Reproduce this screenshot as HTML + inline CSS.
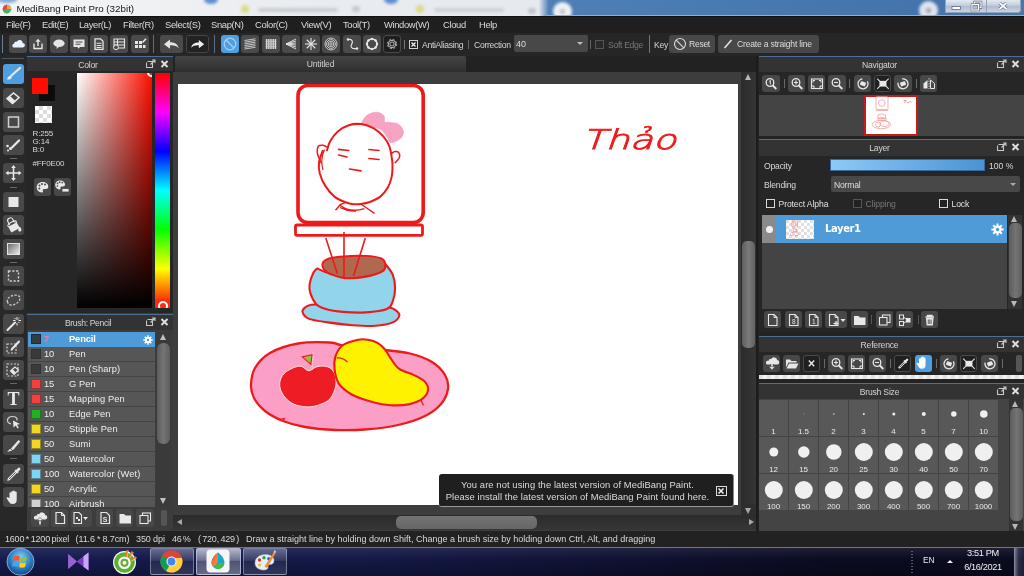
<!DOCTYPE html>
<html lang="en">
<head>
<meta charset="utf-8">
<title>MediBang Paint Pro (32bit)</title>
<style>
*{box-sizing:border-box;margin:0;padding:0}
html,body{width:1024px;height:576px;overflow:hidden;background:#2b2b2b}
body{font-family:"Liberation Sans","DejaVu Sans",sans-serif;font-size:9px;color:#d8d8d8;position:relative;filter:blur(0.45px)}
.abs{position:absolute}
#titlebar{left:0;top:0;width:1024px;height:16px;overflow:hidden;background:linear-gradient(90deg,#f3f4f5 0%,#f0f1f3 14%,#e9ecf0 30%,#e6eaef 52.600%,#4f7fb6 53.600%,#4a7ab2 70%,#4573ac 90%,#4a76ac 100%)}
#titlebar .ttl{left:16.500px;top:2.500px;font-size:9.800px;color:#151515;white-space:nowrap;line-height:11px}
#titlebar .blob{position:absolute;border-radius:50%;filter:blur(1.500px)}
#titlebar .wc{position:absolute;top:0;height:13px;background:linear-gradient(#e4e9f0,#c4cedc 45%,#aebbcd 50%,#c9d3e0);border:1px solid #8fa3bd;border-top:0}
#menubar{left:0;top:16px;width:1024px;height:17px;background:#1f1f1f;border-top:1px solid #111}
#menubar span{position:absolute;top:2px;font-size:9.4px;color:#dcdcdc;white-space:nowrap;letter-spacing:-0.35px}
#toolbar{left:0;top:33px;width:1024px;height:23px;background:#262626}
.tb{position:absolute;top:35px;width:18px;height:18px;background:#4a4a4a;border-radius:3px}
.tb svg,.lt svg,.sb svg{position:absolute;left:0;top:0;width:100%;height:100%}
.sep{position:absolute;width:1px;background:#5a6f86}
.tx{position:absolute;white-space:nowrap}
</style>
</head>
<body>
<!-- ===== title bar ===== -->
<div id="titlebar" class="abs">
  <div class="blob" style="left:-4px;top:-6px;width:22px;height:9px;background:#7fa8d8"></div>
  <div class="blob" style="left:204px;top:-5px;width:14px;height:9px;background:#5f8fd0"></div>
  <div class="blob" style="left:241px;top:5px;width:8px;height:8px;background:#d9dc8a"></div>
  <div class="blob" style="left:258px;top:8px;width:80px;height:4px;background:#c9cdd3;border-radius:2px"></div>
  <div class="blob" style="left:352px;top:6px;width:8px;height:6px;background:#c4c8ce"></div>
  <div class="blob" style="left:384px;top:-5px;width:14px;height:9px;background:#5f8fd0"></div>
  <div class="blob" style="left:416px;top:5px;width:8px;height:8px;background:#dcd98a"></div>
  <div class="blob" style="left:434px;top:8px;width:70px;height:4px;background:#cdd1d7;border-radius:2px"></div>
  <div class="blob" style="left:528px;top:8px;width:8px;height:6px;background:#bfc4cb"></div>
  <div class="blob" style="left:552.500px;top:1.500px;width:19px;height:19px;background:#eef1f5"></div>
  <div class="blob" style="left:559.500px;top:8.500px;width:5px;height:5px;background:#b9bfc8"></div>
  <div class="blob" style="left:919px;top:0.500px;width:19px;height:19px;background:#dfe5ee"></div>
  <div class="blob" style="left:926px;top:7.500px;width:5px;height:5px;background:#9aa3b0"></div>
  <svg class="abs" style="left:2px;top:3.500px" width="10" height="10" viewBox="0 0 10 10"><circle cx="5" cy="5" r="4.300" fill="#2fb8a0"/><path d="M5 .7A4.300 4.300 0 0 0 1.300 7.200L5 5z" fill="#e8483c"/><path d="M5 .7A4.300 4.300 0 0 1 9.300 5L5 5z" fill="#f8a030"/><path d="M1.300 7.200A4.300 4.300 0 0 0 7 8.800L5 5z" fill="#48b848"/></svg>
  <div class="abs" style="left:546px;top:15px;width:478px;height:1px;background:#8fb0d6"></div>
  <div class="abs ttl">MediBang Paint Pro (32bit)</div>
  <div class="wc" style="left:944.500px;width:21px"><svg viewBox="0 0 20 13" style="position:absolute;left:0;top:0;width:20px;height:13px"><rect x="6" y="6.500" width="8.500" height="3" fill="#fff" stroke="#5a6a82" stroke-width="0.800"/></svg></div>
  <div class="wc" style="left:965px;width:22px;border-left:0"><svg viewBox="0 0 21 13" style="position:absolute;left:0;top:0;width:21px;height:13px"><path d="M9.500 4V2h6.500v5.500h-2" fill="none" stroke="#5a6a82" stroke-width="2.400"/><path d="M9.500 4V2h6.500v5.500h-2" fill="none" stroke="#fff" stroke-width="1.200"/><rect x="7" y="4.500" width="6.500" height="5.500" fill="none" stroke="#5a6a82" stroke-width="2.400"/><rect x="7" y="4.500" width="6.500" height="5.500" fill="none" stroke="#fff" stroke-width="1.200"/></svg></div>
  <div class="wc" style="left:986.500px;width:34px;border-left:0;border-radius:0 0 3px 0"><svg viewBox="0 0 10 8" style="position:absolute;left:11.500px;top:2px;width:10px;height:8px"><path d="M1.500 1l7 6M8.500 1l-7 6" stroke="#55657c" stroke-width="3"/><path d="M1.500 1l7 6M8.500 1l-7 6" stroke="#fff" stroke-width="1.800"/></svg></div>
</div>
<!-- ===== menu bar ===== -->
<div id="menubar" class="abs">
  <span style="left:6px">File(F)</span>
  <span style="left:42px">Edit(E)</span>
  <span style="left:79px">Layer(L)</span>
  <span style="left:123px">Filter(R)</span>
  <span style="left:165px">Select(S)</span>
  <span style="left:211px">Snap(N)</span>
  <span style="left:255px">Color(C)</span>
  <span style="left:301px">View(V)</span>
  <span style="left:343px">Tool(T)</span>
  <span style="left:384px">Window(W)</span>
  <span style="left:443px">Cloud</span>
  <span style="left:479px">Help</span>
</div>
<!-- ===== toolbar ===== -->
<div id="toolbar" class="abs"></div>
<!--TOOLBAR-->
<div class="sep" style="left:2px;top:35px;height:18px;background:#6b7f96"></div>
<div class="tb" style="left:9px;width:18px;background:#4a4a4a;"><svg viewBox="0 0 18 18"><path d="M4.5 12.5h9a2.3 2.3 0 0 0 .3-4.6 3.2 3.2 0 0 0-6-1.2 2.2 2.2 0 0 0-2.8 2A2 2 0 0 0 4.5 12.5z" fill="#e8f2ff"/></svg></div>
<div class="tb" style="left:29.25px;width:18px;background:#4a4a4a;"><svg viewBox="0 0 18 18"><path d="M5 8.5v5h8v-5" fill="none" stroke="#e6e6e6" stroke-width="1.4"/><path d="M9 11V5" stroke="#e6e6e6" stroke-width="1.4"/><path d="M6.3 6.8L9 3.8l2.7 3z" fill="#e6e6e6"/></svg></div>
<div class="tb" style="left:49.5px;width:18px;background:#4a4a4a;"><svg viewBox="0 0 18 18"><ellipse cx="9" cy="8.3" rx="5.6" ry="3.7" fill="#e6e6e6"/><path d="M7 11l-.5 3 3-2.5z" fill="#e6e6e6"/></svg></div>
<div class="tb" style="left:69.75px;width:18px;background:#4a4a4a;"><svg viewBox="0 0 18 18"><path d="M3.5 4.5h11v7.5h-4.5l-1.5 1.8-1-1.8h-4z" fill="#e6e6e6"/><path d="M5.5 7h7M5.5 9.3h5" stroke="#4a4a4a" stroke-width="1.1"/></svg></div>
<div class="tb" style="left:90px;width:18px;background:#4a4a4a;"><svg viewBox="0 0 18 18"><path d="M5 3.8h5.5l2.5 2.5v8H5z" fill="none" stroke="#e6e6e6" stroke-width="1.3"/><path d="M6.5 8.3h5M6.5 10.5h5M6.5 12.5h5" stroke="#e6e6e6" stroke-width="1"/></svg></div>
<div class="tb" style="left:110.25px;width:18px;background:#4a4a4a;"><svg viewBox="0 0 18 18"><path d="M4 4h10.5v9H4zM4 7h10.5M4 10h10.5M7.5 4v9" fill="none" stroke="#e6e6e6" stroke-width="1.1"/><circle cx="6" cy="12.3" r="2.4" fill="#4a4a4a" stroke="#e6e6e6" stroke-width="1"/></svg></div>
<div class="tb" style="left:130.5px;width:18px;background:#4a4a4a;"><svg viewBox="0 0 18 18"><path d="M4 6h3v3H4zM8 6h3v3H8zM4 10h3v3H4zM8 10h3v3H8zM12 10h2.5v3H12z" fill="#e6e6e6"/><path d="M11.5 7.5l3.5-3.7" stroke="#e6e6e6" stroke-width="1.6"/></svg></div>
<div class="sep" style="left:153px;top:35px;height:18px"></div>
<div class="tb" style="left:160px;width:23px;background:#4a4a4a;"><svg viewBox="0 0 23 18"><path d="M4 9.2l6-4.6v2.7c4.6 0 8 2 8.6 6-1.7-2.4-4.8-3.1-8.6-2.9v3.4z" fill="#e6e6e6"/></svg></div>
<div class="tb" style="left:186px;width:23px;background:#222;border:1px solid #444;"><svg viewBox="0 0 23 18"><path d="M19 9.2l-6-4.6v2.7c-4.6 0-8 2-8.6 6 1.700-2.400 4.800-3.100 8.600-2.900v3.4z" fill="#f0f0f0"/></svg></div>
<div class="sep" style="left:214px;top:35px;height:18px"></div>
<div class="tb" style="left:221.0px;width:18px;background:#4f9fe0;"><svg viewBox="0 0 18 18"><circle cx="9" cy="9" r="5.800" fill="none" stroke="#9fd0ff" stroke-width="1.300"/><path d="M5 5l8 8" stroke="#9fd0ff" stroke-width="1.300"/></svg></div>
<div class="tb" style="left:241.25px;width:18px;background:#4a4a4a;"><svg viewBox="0 0 18 18"><path d="M3.5 5.5L14.5 3.8" stroke="#e6e6e6" stroke-width="0.8"/><path d="M3.5 7.2L14.5 5.5" stroke="#e6e6e6" stroke-width="0.8"/><path d="M3.5 8.9L14.5 7.199999999999999" stroke="#e6e6e6" stroke-width="0.8"/><path d="M3.5 10.6L14.5 8.899999999999999" stroke="#e6e6e6" stroke-width="0.8"/><path d="M3.5 12.3L14.5 10.6" stroke="#e6e6e6" stroke-width="0.8"/><path d="M3.5 14.0L14.5 12.3" stroke="#e6e6e6" stroke-width="0.8"/></svg></div>
<div class="tb" style="left:261.5px;width:18px;background:#4a4a4a;"><svg viewBox="0 0 18 18"><path d="M4.5 4v10" stroke="#e6e6e6" stroke-width="0.9"/><path d="M6.3 4v10" stroke="#e6e6e6" stroke-width="0.9"/><path d="M8.1 4v10" stroke="#e6e6e6" stroke-width="0.9"/><path d="M9.9 4v10" stroke="#e6e6e6" stroke-width="0.9"/><path d="M11.7 4v10" stroke="#e6e6e6" stroke-width="0.9"/><path d="M13.5 4v10" stroke="#e6e6e6" stroke-width="0.9"/><path d="M3.5 5.0h11" stroke="#e6e6e6" stroke-width="0.6"/><path d="M3.5 6.6h11" stroke="#e6e6e6" stroke-width="0.6"/><path d="M3.5 8.2h11" stroke="#e6e6e6" stroke-width="0.6"/><path d="M3.5 9.8h11" stroke="#e6e6e6" stroke-width="0.6"/><path d="M3.5 11.4h11" stroke="#e6e6e6" stroke-width="0.6"/><path d="M3.5 13.0h11" stroke="#e6e6e6" stroke-width="0.6"/></svg></div>
<div class="tb" style="left:281.75px;width:18px;background:#4a4a4a;"><svg viewBox="0 0 18 18"><path d="M4 9L14 4" stroke="#e6e6e6" stroke-width="0.9"/><path d="M4 9L14 6" stroke="#e6e6e6" stroke-width="0.9"/><path d="M4 9L14 8" stroke="#e6e6e6" stroke-width="0.9"/><path d="M4 9L14 10" stroke="#e6e6e6" stroke-width="0.9"/><path d="M4 9L14 12" stroke="#e6e6e6" stroke-width="0.9"/><path d="M4 9L14 14" stroke="#e6e6e6" stroke-width="0.9"/></svg></div>
<div class="tb" style="left:302.0px;width:18px;background:#4a4a4a;"><svg viewBox="0 0 18 18"><path d="M9 9L15.00 9.00" stroke="#e6e6e6" stroke-width="1.1"/><path d="M9 9L13.24 13.24" stroke="#e6e6e6" stroke-width="1.1"/><path d="M9 9L9.00 15.00" stroke="#e6e6e6" stroke-width="1.1"/><path d="M9 9L4.76 13.24" stroke="#e6e6e6" stroke-width="1.1"/><path d="M9 9L3.00 9.00" stroke="#e6e6e6" stroke-width="1.1"/><path d="M9 9L4.76 4.76" stroke="#e6e6e6" stroke-width="1.1"/><path d="M9 9L9.00 3.00" stroke="#e6e6e6" stroke-width="1.1"/><path d="M9 9L13.24 4.76" stroke="#e6e6e6" stroke-width="1.1"/></svg></div>
<div class="tb" style="left:322.25px;width:18px;background:#4a4a4a;"><svg viewBox="0 0 18 18"><circle cx="9" cy="9" r="1.2" fill="none" stroke="#e6e6e6" stroke-width="0.8"/><circle cx="9" cy="9" r="2.8" fill="none" stroke="#e6e6e6" stroke-width="0.8"/><circle cx="9" cy="9" r="4.4" fill="none" stroke="#e6e6e6" stroke-width="0.8"/><circle cx="9" cy="9" r="6" fill="none" stroke="#e6e6e6" stroke-width="0.8"/></svg></div>
<div class="tb" style="left:342.5px;width:18px;background:#4a4a4a;"><svg viewBox="0 0 18 18"><path d="M5 4.5c5-1 5 3 3.500 5s0 5 5.500 4" fill="none" stroke="#e6e6e6" stroke-width="1.2"/><circle cx="5" cy="4.500" r="1.300" fill="#e6e6e6"/><circle cx="14" cy="13.500" r="1.300" fill="#e6e6e6"/></svg></div>
<div class="tb" style="left:362.75px;width:18px;background:#4a4a4a;"><svg viewBox="0 0 18 18"><circle cx="9" cy="9" r="5" fill="none" stroke="#e6e6e6" stroke-width="1.6"/><circle cx="14.00" cy="9.00" r="1.2" fill="#e6e6e6"/><circle cx="12.54" cy="12.54" r="1.2" fill="#e6e6e6"/><circle cx="9.00" cy="14.00" r="1.2" fill="#e6e6e6"/><circle cx="5.46" cy="12.54" r="1.2" fill="#e6e6e6"/><circle cx="4.00" cy="9.00" r="1.2" fill="#e6e6e6"/><circle cx="5.46" cy="5.46" r="1.2" fill="#e6e6e6"/><circle cx="9.00" cy="4.00" r="1.2" fill="#e6e6e6"/><circle cx="12.54" cy="5.46" r="1.2" fill="#e6e6e6"/></svg></div>
<div class="tb" style="left:383.0px;width:18px;background:#1e1e1e;border:1px solid #4a4a4a;"><svg viewBox="0 0 18 18"><circle cx="9" cy="9" r="5.2" fill="none" stroke="#c8c8c8" stroke-width="1" stroke-dasharray="2.2 1.9"/><circle cx="9" cy="9" r="4.200" fill="none" stroke="#c8c8c8" stroke-width="1"/><circle cx="9" cy="9" r="2.300" fill="none" stroke="#c8c8c8" stroke-width="1"/></svg></div>
<div class="sep" style="left:404px;top:40px;height:9px;background:#777"></div>
<div class="abs" style="left:409px;top:40px;width:9px;height:9px;border:1px solid #d0d0d0;background:#222"><svg viewBox="0 0 7 7" style="position:absolute;left:0;top:0;width:7px;height:7px"><path d="M1.500 1.500l4 4M5.500 1.500l-4 4" stroke="#eee" stroke-width="1.300"/></svg></div>
<div class="tx" style="left:422px;top:39.500px;font-size:8.600px;color:#d6d6d6;letter-spacing:-0.3px">AntiAliasing</div>
<div class="sep" style="left:468px;top:40px;height:9px;background:#666"></div>
<div class="tx" style="left:474px;top:39.500px;font-size:8.600px;color:#d6d6d6;letter-spacing:-0.3px">Correction</div>
<div class="abs" style="left:514px;top:35px;width:74px;height:17px;background:#484848;border-radius:2px"><div class="tx" style="left:2px;top:4px;font-size:9px;color:#ddd">40</div><div class="abs" style="right:5px;top:7px;border-left:3px solid transparent;border-right:3px solid transparent;border-top:3px solid #bbb"></div></div>
<div class="sep" style="left:590px;top:40px;height:9px;background:#666"></div>
<div class="abs" style="left:595px;top:40px;width:9px;height:9px;border:1px solid #555;background:#2a2a2a"></div>
<div class="tx" style="left:608px;top:39.500px;font-size:8.600px;color:#777;letter-spacing:-0.3px">Soft Edge</div>
<div class="sep" style="left:649px;top:35px;height:18px;background:#4f7fb0"></div>
<div class="tx" style="left:654px;top:39.500px;font-size:8.600px;color:#d6d6d6;letter-spacing:-0.3px">Key</div>
<div class="abs" style="left:669px;top:35px;width:46px;height:18px;background:#484848;border-radius:3px"><svg viewBox="0 0 18 18" style="position:absolute;left:2px;top:0;width:18px;height:18px"><circle cx="9" cy="9" r="5.500" fill="none" stroke="#ddd" stroke-width="1.100"/><path d="M5.200 5.200l7.600 7.600" stroke="#ddd" stroke-width="1.100"/></svg><div class="tx" style="left:20px;top:4px;font-size:8.600px;color:#ddd;letter-spacing:-0.3px">Reset</div></div>
<div class="abs" style="left:718px;top:35px;width:101px;height:18px;background:#484848;border-radius:3px"><svg viewBox="0 0 18 18" style="position:absolute;left:1px;top:0;width:18px;height:18px"><path d="M5.500 13l7-8" stroke="#e8e8e8" stroke-width="1.500"/></svg><div class="tx" style="left:19px;top:4px;font-size:8.600px;color:#ddd;letter-spacing:-0.2px">Create a straight line</div></div>
<!--/TOOLBAR-->
<!--LEFTTOOLS-->
<div class="abs" style="left:0;top:56px;width:27px;height:475px;background:#282828"></div>
<div class="abs" style="left:2px;top:58px;width:22px;height:1px;background:#555"></div>
<div class="lt abs" style="left:3px;top:64px;width:21px;height:20px;background:#4f9fe0;border-radius:3px"><svg viewBox="0 0 21 20"><path d="M8.500 11.500L17 4" stroke="#e8e8e8" stroke-width="2.200" stroke-linecap="round"/><path d="M4 15.500c.5-2.500 2-4 4-3.700 1.500 1 .8 3.200-1 3.700z" fill="#e8e8e8"/></svg></div>
<div class="lt abs" style="left:3px;top:88px;width:21px;height:20px;background:#484848;border-radius:3px"><svg viewBox="0 0 21 20"><path d="M4 10.500l6.500-5.500 5.500 4.500-6.500 6z" fill="none" stroke="#e8e8e8" stroke-width="1.600"/><path d="M4 10.500l3-2.500 5.500 5-3 3z" fill="#e8e8e8"/></svg></div>
<div class="lt abs" style="left:3px;top:111.5px;width:21px;height:20px;background:#484848;border-radius:3px"><svg viewBox="0 0 21 20"><rect x="5.500" y="5" width="10" height="10" fill="none" stroke="#d0d0d0" stroke-width="1.500"/></svg></div>
<div class="lt abs" style="left:3px;top:135px;width:21px;height:20px;background:#484848;border-radius:3px"><svg viewBox="0 0 21 20"><path d="M9 12.500L16 5.500" stroke="#e8e8e8" stroke-width="2.200" stroke-linecap="round"/><circle cx="4.500" cy="11" r="1.300" fill="#e8e8e8"/><circle cx="7.500" cy="13.500" r="1.500" fill="#e8e8e8"/><circle cx="5" cy="15.500" r="1" fill="#e8e8e8"/></svg></div>
<div class="abs" style="left:10px;top:157.5px;width:7px;height:1px;background:#666"></div>
<div class="lt abs" style="left:3px;top:163px;width:21px;height:20px;background:#484848;border-radius:3px"><svg viewBox="0 0 21 20"><path d="M10.500 3.500v13M4 10h13" stroke="#e8e8e8" stroke-width="1.500"/><path d="M10.500 2l2.300 3h-4.600zM10.500 18l2.300-3h-4.600zM2.500 10l3-2.300v4.600zM18.500 10l-3-2.300v4.600z" fill="#e8e8e8"/></svg></div>
<div class="abs" style="left:10px;top:186.5px;width:7px;height:1px;background:#666"></div>
<div class="lt abs" style="left:3px;top:192px;width:21px;height:20px;background:#484848;border-radius:3px"><svg viewBox="0 0 21 20"><rect x="5.500" y="5" width="10" height="10" fill="#e8e8e8"/></svg></div>
<div class="lt abs" style="left:3px;top:215px;width:21px;height:20px;background:#484848;border-radius:3px"><svg viewBox="0 0 21 20"><g transform="rotate(-28 10 11)"><path d="M5.500 8.500h9.500v7.500h-9.500z" fill="#e8e8e8"/><ellipse cx="10.250" cy="8.500" rx="4.750" ry="1.600" fill="#484848" stroke="#e8e8e8" stroke-width="1.100"/><path d="M7.500 8.500V5a2.700 2.700 0 0 1 5.400 0V8.500" fill="none" stroke="#e8e8e8" stroke-width="1.100"/></g><path d="M16.800 11.500c1 1.600 1.600 2.700 1.600 3.500a1.600 1.600 0 0 1-3.200 0c0-.8.600-1.900 1.600-3.500z" fill="#e8e8e8"/></svg></div>
<div class="lt abs" style="left:3px;top:238.5px;width:21px;height:20px;background:#484848;border-radius:3px"><svg viewBox="0 0 21 20"><defs><linearGradient id="lg1" x1="0" y1="0" x2="1" y2="1"><stop offset="0" stop-color="#666"/><stop offset="1" stop-color="#f0f0f0"/></linearGradient></defs><rect x="4.500" y="4.500" width="12" height="11" fill="url(#lg1)" stroke="#e0e0e0" stroke-width="1"/></svg></div>
<div class="abs" style="left:10px;top:261.5px;width:7px;height:1px;background:#666"></div>
<div class="lt abs" style="left:3px;top:266px;width:21px;height:20px;background:#484848;border-radius:3px"><svg viewBox="0 0 21 20"><rect x="5.500" y="5" width="10" height="10" fill="none" stroke="#d0d0d0" stroke-width="1.400" stroke-dasharray="2.200 1.600"/></svg></div>
<div class="lt abs" style="left:3px;top:289.5px;width:21px;height:20px;background:#484848;border-radius:3px"><svg viewBox="0 0 21 20"><path d="M4.500 12c-1.500-3.500 3-6.500 7.500-6.800 4-.2 6 2 4.500 5-1.500 3-5 4.800-8.500 4.800-2 0-3-1.500-3.500-3z" fill="none" stroke="#c8c8c8" stroke-width="1.300" stroke-dasharray="2.200 1.500"/></svg></div>
<div class="lt abs" style="left:3px;top:313.5px;width:21px;height:20px;background:#484848;border-radius:3px"><svg viewBox="0 0 21 20"><path d="M4.500 16L12 8.500" stroke="#e8e8e8" stroke-width="2" stroke-linecap="round"/><path d="M14 3v3M14 9v2.500M10 6.500h2.500M15.500 6.500h2.500M11.500 4l1.200 1.200M16.500 4l-1.200 1.200M16.500 9l-1.200-1.200" stroke="#e8e8e8" stroke-width="1"/></svg></div>
<div class="lt abs" style="left:3px;top:336.5px;width:21px;height:20px;background:#484848;border-radius:3px"><svg viewBox="0 0 21 20"><rect x="4" y="7" width="9" height="9" fill="none" stroke="#d0d0d0" stroke-width="1.200" stroke-dasharray="2 1.500"/><path d="M9 12l7-7.500" stroke="#e8e8e8" stroke-width="2" stroke-linecap="round"/><path d="M7.500 14l.8-2.500 1.700 1.600z" fill="#e8e8e8"/></svg></div>
<div class="lt abs" style="left:3px;top:359.5px;width:21px;height:20px;background:#484848;border-radius:3px"><svg viewBox="0 0 21 20"><rect x="4" y="4" width="11" height="12" fill="none" stroke="#d0d0d0" stroke-width="1.200" stroke-dasharray="2 1.500"/><path d="M7.500 11l4.500-4 3.500 3-4.500 4.500z" fill="#484848" stroke="#e8e8e8" stroke-width="1.200"/><path d="M7.500 11l2-1.800 3.500 3.300-2 2z" fill="#e8e8e8"/></svg></div>
<div class="abs" style="left:10px;top:382.5px;width:7px;height:1px;background:#666"></div>
<div class="lt abs" style="left:3px;top:388.5px;width:21px;height:20px;background:#484848;border-radius:3px"><svg viewBox="0 0 21 20"><text x="10.500" y="16" font-family="Liberation Serif,serif" font-weight="bold" font-size="18" text-anchor="middle" fill="#e8e8e8">T</text></svg></div>
<div class="lt abs" style="left:3px;top:411.5px;width:21px;height:20px;background:#484848;border-radius:3px"><svg viewBox="0 0 21 20"><path d="M4.500 9c-.5-2.500 2-4.500 5-4.500s5 1.500 4.500 4" fill="none" stroke="#d0d0d0" stroke-width="1.200"/><path d="M4.500 9c.3 1.500 1.500 2.500 3.500 2.800" fill="none" stroke="#d0d0d0" stroke-width="1.200"/><path d="M10 8.500l7 3.500-3 .8 1.800 3-1.300.7-1.800-3-2.200 2z" fill="#e8e8e8"/></svg></div>
<div class="lt abs" style="left:3px;top:434.5px;width:21px;height:20px;background:#484848;border-radius:3px"><svg viewBox="0 0 21 20"><path d="M8 13.500L15.500 5l1.800 1.600L10 15.200z" fill="#e8e8e8"/><path d="M4 17l3.200-3.200 2 1.800z" fill="#e8e8e8"/></svg></div>
<div class="abs" style="left:10px;top:457.5px;width:7px;height:1px;background:#666"></div>
<div class="lt abs" style="left:3px;top:463.5px;width:21px;height:20px;background:#484848;border-radius:3px"><svg viewBox="0 0 21 20"><path d="M6 15l7-7" stroke="#e8e8e8" stroke-width="2.600" stroke-linecap="round"/><path d="M6 15l7-7" stroke="#484848" stroke-width="0.900" stroke-linecap="round"/><path d="M12 6l3 3" stroke="#e8e8e8" stroke-width="1.600"/><path d="M13.500 7.500l2.500-2.500" stroke="#e8e8e8" stroke-width="2.800" stroke-linecap="round"/><path d="M4.500 16.500l1.200-1.200" stroke="#e8e8e8" stroke-width="1.200"/></svg></div>
<div class="lt abs" style="left:3px;top:486.5px;width:21px;height:20px;background:#484848;border-radius:3px"><svg viewBox="0 0 21 20"><path d="M6.500 11V6.200a.9.900 0 0 1 1.800 0V9.500 4.800a.9.900 0 0 1 1.800 0V9.500 4.300a.9.900 0 0 1 1.800 0V9.500 5.300a.9.900 0 0 1 1.800 0V13c0 2.500-1.500 4-4 4-2 0-3-.8-4-2.500L3.800 11.500c-.5-1 .6-1.700 1.300-1z" fill="#e8e8e8"/></svg></div>
<!--/LEFTTOOLS-->
<!--COLORPANEL-->
<style>
.ph{position:absolute;height:15px;background:#333;border-top:1px solid #4c6f94;font-size:8.6px;color:#d4d4d4;text-align:center;line-height:16px;letter-spacing:-0.2px;overflow:hidden}
.ph .ic{position:absolute;top:2px;right:3px;width:24px;height:10px}
.row{position:absolute;left:0;width:127px;height:15px;background:#565656;border-bottom:1px solid #444}
.row i{position:absolute;left:3px;top:2px;width:10px;height:10px;border:1px solid rgba(40,40,40,0.45)}
.row b{position:absolute;left:16px;top:2px;font-weight:normal;font-size:9.300px;color:#eee;letter-spacing:-0.1px}
.row span{position:absolute;left:41px;top:2px;font-size:9.300px;color:#eee;white-space:nowrap;letter-spacing:0.1px}
.sbt{position:absolute;width:18px;height:18px;background:#484848;border-radius:3px}
.sbt svg{position:absolute;left:0;top:0;width:100%;height:100%}
</style>
<div class="abs" style="left:27px;top:56px;width:146px;height:257px;background:#262626"></div>
<div class="ph" style="left:27px;top:56px;width:146px"><span style="position:relative;left:-12px">Color</span><svg class="ic" viewBox="0 0 24 10"><path d="M1.500 2.500h5v6h-6v-5" fill="none" stroke="#c8c8c8" stroke-width="1.100"/><path d="M4.500 5.500l4-4M6 1h3v3" fill="none" stroke="#c8c8c8" stroke-width="1.100"/><path d="M15.500 2l6 6M21.500 2l-6 6" stroke="#e0e0e0" stroke-width="1.900"/></svg></div>
<div class="abs" style="left:39px;top:85px;width:16px;height:16px;background:#0c0c0c"></div>
<div class="abs" style="left:32px;top:78px;width:16px;height:16px;background:#ff0e00"></div>
<div class="abs" style="left:35px;top:106px;width:17px;height:17px;background:#fff;background-image:linear-gradient(45deg,#ddd 25%,transparent 25%,transparent 75%,#ddd 75%),linear-gradient(45deg,#ddd 25%,transparent 25%,transparent 75%,#ddd 75%);background-size:8px 8px;background-position:0 0,4px 4px"></div>
<div class="tx" style="left:32.500px;top:128.5px;font-size:8px;color:#d8d8d8;letter-spacing:-0.15px">R:255</div>
<div class="tx" style="left:32.500px;top:136.5px;font-size:8px;color:#d8d8d8;letter-spacing:-0.15px">G:14</div>
<div class="tx" style="left:32.500px;top:144.5px;font-size:8px;color:#d8d8d8;letter-spacing:-0.15px">B:0</div>
<div class="tx" style="left:32.500px;top:158.5px;font-size:8px;color:#d8d8d8;letter-spacing:-0.15px">#FF0E00</div>
<div class="sbt" style="left:34px;top:178px;width:17px"><svg viewBox="0 0 17 18"><g transform="translate(-0.5,0.5)"><path d="M9 3.500c-3.300 0-5.800 2.300-5.800 5.300 0 2.800 2.200 5.200 5 5.200 1.200 0 1.500-.8 1.200-1.600-.4-1 .2-1.900 1.300-1.900h1.600c1.500 0 2.500-1 2.500-2.300C14.800 5.500 12.300 3.500 9 3.500z" fill="#e8e8e8"/><circle cx="6" cy="7" r="1" fill="#484848"/><circle cx="8.500" cy="5.500" r="1" fill="#484848"/><circle cx="11.500" cy="6" r="1" fill="#484848"/><circle cx="5.800" cy="10" r="1" fill="#484848"/></g></svg></div>
<div class="sbt" style="left:54px;top:178px;width:17px"><svg viewBox="0 0 17 18"><g transform="translate(-1.500,-0.500) scale(0.850)"><path d="M9 3.500c-3.300 0-5.800 2.300-5.800 5.300 0 2.800 2.200 5.200 5 5.200 1.200 0 1.500-.8 1.200-1.600-.4-1 .2-1.900 1.300-1.900h1.600c1.500 0 2.500-1 2.500-2.300C14.800 5.500 12.300 3.500 9 3.500z" fill="#e8e8e8"/><circle cx="6" cy="7" r="1" fill="#484848"/><circle cx="8.500" cy="5.500" r="1" fill="#484848"/><circle cx="11.500" cy="6" r="1" fill="#484848"/><circle cx="5.800" cy="10" r="1" fill="#484848"/></g><rect x="8" y="10.500" width="7" height="3.500" fill="#e8e8e8" stroke="#484848" stroke-width="0.800"/></svg></div>
<div class="abs" style="left:77px;top:73px;width:75px;height:235px;background:linear-gradient(to bottom,rgba(0,0,0,0),#000),linear-gradient(to right,#fff,#ff0e00)"></div>
<div class="abs" style="left:147px;top:68px;width:9px;height:9px;border:2px solid #fff;border-radius:50%;clip-path:inset(5px 4px 0 0)"></div>
<div class="abs" style="left:155px;top:73px;width:15px;height:235px;background:linear-gradient(to bottom,#f00 0%,#f0f 16.600%,#00f 33.300%,#0ff 50%,#0f0 66.600%,#ff0 83.300%,#f00 100%)"></div>
<div class="abs" style="left:155px;top:299px;width:15px;height:9px;background:#ff2a10;overflow:hidden"><div class="abs" style="left:2.500px;top:1.500px;width:10px;height:10px;border:2px solid #fff;border-radius:50%"></div></div>
<div class="abs" style="left:27px;top:313px;width:146px;height:218px;background:#3c3c3c"></div>
<div class="ph" style="left:27px;top:314px;width:146px;height:16px;line-height:16px"><span style="position:relative;left:-12px;letter-spacing:-0.35px">Brush: Pencil</span><svg class="ic" viewBox="0 0 24 10"><path d="M1.500 2.500h5v6h-6v-5" fill="none" stroke="#c8c8c8" stroke-width="1.100"/><path d="M4.500 5.500l4-4M6 1h3v3" fill="none" stroke="#c8c8c8" stroke-width="1.100"/><path d="M15.500 2l6 6M21.500 2l-6 6" stroke="#e0e0e0" stroke-width="1.900"/></svg></div>
<div class="abs" style="left:28px;top:332px;width:127px;height:174.500px;overflow:hidden;background:#565656">
<div class="row" style="top:0;background:#4f9bd8;border-bottom-color:#4f9bd8"><i style="background:#333b44;border-color:#1c2a3a"></i><b style="color:#e87fb4;font-weight:bold">7</b><span style="font-weight:bold;color:#fff;letter-spacing:-0.1px">Pencil</span><svg viewBox="0 0 10 10" style="position:absolute;left:115px;top:2.500px;width:10px;height:10px"><circle cx="5" cy="5" r="3.100" fill="#fff"/><path d="M5 .3v9.400M.3 5h9.400M1.700 1.700l6.600 6.600M8.300 1.700l-6.600 6.600" stroke="#fff" stroke-width="1.500"/><circle cx="5" cy="5" r="1.200" fill="#4f9bd8"/></svg></div>
<div class="row" style="top:15px"><i style="background:#3a3a3a"></i><b>10</b><span>Pen</span></div>
<div class="row" style="top:30px"><i style="background:#3a3a3a"></i><b>10</b><span>Pen (Sharp)</span></div>
<div class="row" style="top:45px"><i style="background:#f04040"></i><b>15</b><span>G Pen</span></div>
<div class="row" style="top:60px"><i style="background:#f04040"></i><b>15</b><span>Mapping Pen</span></div>
<div class="row" style="top:75px"><i style="background:#22b022"></i><b>10</b><span>Edge Pen</span></div>
<div class="row" style="top:90px"><i style="background:#f0d820"></i><b>50</b><span>Stipple Pen</span></div>
<div class="row" style="top:105px"><i style="background:#f0d820"></i><b>50</b><span>Sumi</span></div>
<div class="row" style="top:120px"><i style="background:#7fd4f4"></i><b>50</b><span>Watercolor</span></div>
<div class="row" style="top:135px"><i style="background:#7fd4f4"></i><b>100</b><span>Watercolor (Wet)</span></div>
<div class="row" style="top:150px"><i style="background:#f0d820"></i><b>50</b><span>Acrylic</span></div>
<div class="row" style="top:165px"><i style="background:#d0d0d0"></i><b>100</b><span>Airbrush</span></div>
</div>
<div class="abs" style="left:156px;top:331px;width:15px;height:175px;background:#3a3a3a"></div>
<div class="abs" style="left:160px;top:334px;border-left:3.500px solid transparent;border-right:3.500px solid transparent;border-bottom:6px solid #c0c0c0"></div>
<div class="abs" style="left:160px;top:498px;border-left:3.500px solid transparent;border-right:3.500px solid transparent;border-top:6px solid #c0c0c0"></div>
<div class="abs" style="left:157px;top:343px;width:13px;height:101px;border-radius:6px;background:linear-gradient(90deg,#5c5c5c,#747474 50%,#5e5e5e)"></div>
<div class="sbt" style="left:31px;top:509px;width:18px"><svg viewBox="0 0 18 18"><path d="M4 10.500h10a2.200 2.200 0 0 0 .2-4.400 3.200 3.200 0 0 0-6-1 2.200 2.200 0 0 0-2.700 2A1.800 1.800 0 0 0 4 10.500z" fill="#e8e8e8"/><path d="M9 15v-5" stroke="#484848" stroke-width="3"/><path d="M9 15.500V10" stroke="#e8e8e8" stroke-width="1.600"/><path d="M6 11.500l3-3.200 3 3.200z" fill="#e8e8e8" stroke="#484848" stroke-width="0.600"/></svg></div>
<div class="sbt" style="left:51px;top:509px;width:17px"><svg viewBox="0 0 17 18"><path d="M5 3.500h5.500l3 3v8h-8.500z" fill="none" stroke="#e8e8e8" stroke-width="1.200"/><path d="M10.500 3.500v3h3" fill="none" stroke="#e8e8e8" stroke-width="1"/></svg></div>
<div class="sbt" style="left:71px;top:509px;width:21px"><svg viewBox="0 0 21 18"><path d="M3 3.500h5l2.500 2.500v8.500h-7.500z" fill="none" stroke="#e8e8e8" stroke-width="1.100"/><path d="M5 8h2v2h-2zM7 10h2v2h-2z" fill="#e8e8e8"/><path d="M12 8h5l-2.500 3z" fill="#e8e8e8"/></svg></div>
<div class="sbt" style="left:96px;top:509px;width:17px"><svg viewBox="0 0 17 18"><path d="M5 3.500h5.500l3 3v8h-8.500z" fill="none" stroke="#e8e8e8" stroke-width="1.200"/><text x="9.200" y="13" font-size="7" font-family="Liberation Sans,sans-serif" text-anchor="middle" fill="#e8e8e8" font-weight="bold">S</text></svg></div>
<div class="sbt" style="left:116px;top:509px;width:17px"><svg viewBox="0 0 17 18"><path d="M3.500 5h4.500l1.500 1.500h5.500v8h-11.500z" fill="#e8e8e8"/></svg></div>
<div class="sbt" style="left:136px;top:509px;width:18px"><svg viewBox="0 0 18 18"><rect x="6.500" y="4" width="8" height="8" fill="none" stroke="#e8e8e8" stroke-width="1.100"/><rect x="4" y="6.500" width="8" height="8" fill="#484848" stroke="#e8e8e8" stroke-width="1.100"/></svg></div>
<div class="abs" style="left:161px;top:510px;width:6px;height:16px;background:#555;border-radius:2px"></div>
<!--/COLORPANEL-->
<!--CANVAS-->
<div class="abs" style="left:173px;top:56px;width:584px;height:475px;background:#3d3d3d"></div>
<div class="abs" style="left:173px;top:56px;width:584px;height:16px;background:#222"></div>
<div class="abs" style="left:175px;top:56px;width:291px;height:16px;background:linear-gradient(#454545,#2e2e2e);border-radius:2px 2px 0 0"><div class="tx" style="left:0;width:291px;text-align:center;top:2.500px;font-size:8.600px;color:#cfcfcf;letter-spacing:-0.2px">Untitled</div></div>
<svg class="abs" style="left:178px;top:84px" width="560" height="421" viewBox="178 84 560 421"><rect x="178" y="84" width="560" height="421" fill="#fff"/>
<rect x="298" y="85.400" width="125.200" height="137.200" rx="10" ry="10" fill="none" stroke="#ee1a1a" stroke-width="3.600"/>
<rect x="295.500" y="225" width="127" height="10.300" rx="1.500" fill="#fff" stroke="#ee1a1a" stroke-width="2.800"/>
<path d="M362.0 122.9C362.0 121.1 365.0 116.8 367.5 115.0C370.0 113.2 374.2 112.1 376.9 112.2C379.6 112.4 382.6 114.2 383.9 115.8C385.2 117.4 383.6 120.9 384.5 122.0C385.4 123.1 387.0 122.1 389.4 122.5C391.8 122.9 396.4 122.9 398.8 124.4C401.1 125.9 403.1 129.2 403.4 131.5C403.7 133.8 402.4 136.7 400.3 138.5C398.2 140.3 393.2 142.9 390.9 142.4C388.6 141.9 388.1 137.6 386.2 135.4C384.4 133.2 383.1 130.7 380.0 129.1C376.9 127.5 370.5 127.0 367.5 126.0C364.5 125.0 362.0 124.7 362.0 122.9z" fill="#f7a3c4" stroke="#f48fb4" stroke-width="0.600"/>
<path d="M326.9 151.0C327.4 149.4 328.2 144.8 330.0 141.6C331.8 138.3 334.7 134.2 337.8 131.5C340.9 128.8 344.8 126.4 348.8 125.2C352.7 124.0 357.1 123.6 361.2 124.1C365.4 124.6 370.1 126.3 373.8 128.3C377.4 130.3 380.5 133.2 383.1 136.2C385.7 139.2 388.0 142.8 389.4 146.3C390.8 149.8 391.2 154.0 391.7 157.2C392.2 160.5 392.5 162.4 392.5 165.6C392.5 168.8 392.5 172.9 391.7 176.6C390.9 180.2 389.8 184.1 387.8 187.5C385.9 190.9 383.1 194.4 380.0 196.9C376.9 199.4 372.1 201.1 369.0 202.3C365.9 203.5 363.9 203.6 361.2 203.9C358.6 204.2 355.6 204.5 353.0 204.2C350.4 203.9 348.7 203.5 345.6 202.3C342.6 201.1 338.1 199.6 334.7 196.9C331.3 194.2 327.8 189.8 325.3 185.9C322.8 182.0 320.9 177.3 319.8 173.4C318.8 169.5 318.5 166.4 319.0 162.5C319.5 158.6 322.3 152.1 323.0 150.0" fill="none" stroke="#ee1a1a" stroke-width="2"/>
<path d="M327.5 147.5C326.8 147.1 324.5 145.5 323.0 145.3C321.5 145.1 319.2 145.1 318.3 146.3C317.4 147.5 317.2 150.7 317.3 152.6C317.4 154.5 318.3 156.2 319.0 158.0C319.7 159.8 321.0 162.6 321.4 163.5" fill="none" stroke="#ee1a1a" stroke-width="1.500"/>
<path d="M324.500 149.500C322 155 321 163 323 170" fill="none" stroke="#ee1a1a" stroke-width="1.200"/>
<path d="M391.7 153.3C392.2 153.0 393.8 151.6 395.0 151.5C396.2 151.4 398.0 151.6 398.8 152.6C399.5 153.6 399.8 155.9 399.5 157.2C399.2 158.6 398.0 159.5 397.2 160.5C396.4 161.5 395.2 162.8 394.8 163.3" fill="none" stroke="#ee1a1a" stroke-width="1.500"/>
<path d="M338.600 149.400l10.150 1.100M338.600 155l8.400 2M369 149.500l10 1M369 158.500l10 1M349.500 169l11.500 1.800" fill="none" stroke="#ee1a1a" stroke-width="1.700" stroke-linecap="round"/>
<path d="M345.600 202.300L340.200 204.700L335.500 210.200M340.200 205.500Q350.300 213 364.400 208.600M340 207.500Q348 211.800 356 211M360.500 203.900L365.200 207L374.500 213.300" fill="none" stroke="#ee1a1a" stroke-width="1.400"/>
<path d="M302.5 312.0C301.9 310.1 303.6 308.7 305.0 307.5C306.4 306.3 308.5 305.3 311.0 304.8C313.5 304.3 313.5 304.3 320.0 304.5C326.5 304.7 340.0 305.8 350.0 306.0C360.0 306.2 373.3 305.8 380.0 306.0C386.7 306.2 387.2 306.7 390.0 307.5C392.8 308.3 394.9 309.5 396.5 310.9C398.1 312.3 399.9 313.8 399.3 315.7C398.7 317.6 396.7 320.7 392.7 322.4C388.7 324.1 382.2 325.3 375.5 325.8C368.8 326.3 360.6 325.8 352.6 325.2C344.6 324.6 335.0 323.5 327.7 322.4C320.4 321.3 312.8 320.3 308.6 318.6C304.4 316.9 303.1 313.9 302.5 312.0z" fill="#92d4ea" stroke="#ee1a1a" stroke-width="2.100"/>
<path d="M322.4 266.0C321.9 263.6 323.4 261.0 326.8 259.4C330.2 257.8 336.5 257.1 343.0 256.5C349.5 255.9 359.5 255.6 365.9 255.9C372.3 256.2 377.9 257.0 381.2 258.4C384.4 259.8 385.1 262.0 385.4 264.1C385.7 266.2 386.4 268.7 383.1 270.8C379.9 272.9 372.3 275.4 365.9 276.6C359.5 277.8 350.9 278.6 344.9 278.1C338.8 277.6 333.4 275.7 329.6 273.7C325.9 271.7 322.9 268.4 322.4 266.0z" fill="#b0694e" stroke="#ee1a1a" stroke-width="1.800"/>
<path d="M317.2 268.5C319.3 269.4 325.0 272.1 329.6 273.7C334.2 275.3 338.8 277.6 344.9 278.1C350.9 278.6 359.5 277.8 365.9 276.6C372.3 275.4 379.9 272.9 383.1 270.8C386.4 268.7 385.0 265.2 385.4 264.1C386.6 265.9 391.1 270.6 392.7 274.6C394.3 278.6 395.1 283.5 395.1 288.0C395.1 292.5 394.1 297.9 392.7 301.4C391.3 304.9 391.4 307.2 386.9 309.0C382.4 310.8 373.2 311.9 365.9 312.4C358.6 312.9 349.7 312.5 343.0 311.9C336.3 311.3 330.2 310.3 325.8 309.0C321.4 307.7 318.9 306.8 316.3 304.2C313.8 301.6 311.6 297.0 310.5 293.7C309.4 290.4 309.1 287.7 309.6 284.2C310.1 280.7 312.1 275.3 313.4 272.7C314.7 270.1 316.6 269.2 317.2 268.5z" fill="#92d4ea" stroke="#ee1a1a" stroke-width="2.100" stroke-linejoin="round"/>
<path d="M325.800 238L337.300 273.500M344 232V277M365.300 238L353.500 276" fill="none" stroke="#ee1a1a" stroke-width="1.600"/>
<path d="M251.0 385.0C251.2 380.0 251.8 373.3 255.0 368.0C258.2 362.7 262.8 357.1 270.0 353.0C277.2 348.9 288.0 345.2 298.0 343.5C308.0 341.8 322.2 342.1 330.0 342.5C337.8 342.9 336.7 344.8 345.0 346.0C353.3 347.2 369.2 348.2 380.0 349.5C390.8 350.8 401.3 351.4 410.0 353.5C418.7 355.6 426.2 358.4 432.0 362.0C437.8 365.6 442.3 370.5 445.0 375.0C447.7 379.5 448.7 384.2 448.0 389.0C447.3 393.8 444.8 399.5 441.0 404.0C437.2 408.5 432.2 412.5 425.0 416.0C417.8 419.5 408.0 422.8 398.0 425.0C388.0 427.2 375.5 428.7 365.0 429.5C354.5 430.3 345.0 430.4 335.0 430.0C325.0 429.6 313.7 428.5 305.0 427.0C296.3 425.5 289.7 423.7 283.0 421.0C276.3 418.3 269.8 414.8 265.0 411.0C260.2 407.2 256.3 402.3 254.0 398.0C251.7 393.7 250.8 390.0 251.0 385.0z" fill="#fc9fc6" stroke="#ee1a1a" stroke-width="2.300"/>
<path d="M279 419.500l5.500-1.200-1.500 3" fill="none" stroke="#ee1a1a" stroke-width="1.200"/>
<path d="M279.7 383.7C279.9 380.9 280.9 377.8 282.5 375.5C284.1 373.2 286.4 371.3 289.4 369.7C292.3 368.1 297.0 365.9 300.2 366.1C303.4 366.3 306.2 370.7 308.8 370.8C311.4 370.9 313.5 367.8 316.0 367.0C318.5 366.2 321.3 365.9 323.8 366.1C326.3 366.4 329.1 367.0 331.0 368.5C332.9 370.0 334.2 372.1 335.0 375.0C335.8 377.9 336.6 381.9 335.8 385.9C335.0 389.8 332.8 395.6 330.2 398.7C327.6 401.8 323.6 403.1 320.0 404.5C316.4 405.9 312.8 406.8 308.8 406.9C304.8 407.0 299.6 406.2 296.0 405.0C292.4 403.8 289.7 402.0 287.3 399.8C284.9 397.6 282.8 394.7 281.5 392.0C280.2 389.3 279.5 386.4 279.7 383.7z" fill="#ee1c24" stroke="#fde4e4" stroke-width="1"/>
<path d="M313 352.600L312 369.700" stroke="#f8c0c8" stroke-width="1.500" fill="none"/>
<path d="M302.300 356.900L312 354.700L310.900 364.400z" fill="#8cc63f" stroke="#ee1a1a" stroke-width="1.100"/>
<path d="M323.800 355.800L334.500 356.900" stroke="#f6a0a8" stroke-width="1.200" fill="none"/>
<path d="M358.2 339.7C362.3 338.8 364.8 339.3 368.0 339.8C371.2 340.3 374.7 341.3 377.5 342.9C380.3 344.5 382.9 347.0 385.0 349.5C387.1 352.0 388.1 354.7 390.4 357.9C392.7 361.1 395.1 365.8 399.0 368.7C402.9 371.6 409.7 373.0 414.0 375.1C418.3 377.2 422.5 379.1 424.8 381.6C427.1 384.1 428.4 387.4 428.0 390.2C427.6 393.0 425.7 396.4 422.6 398.7C419.6 401.0 415.1 403.0 409.7 404.1C404.3 405.2 397.2 405.7 390.4 405.2C383.6 404.7 375.3 402.7 368.9 400.9C362.4 399.1 356.7 397.4 351.7 394.5C346.7 391.6 341.7 388.0 338.8 383.7C335.9 379.4 335.0 373.3 334.5 368.7C334.0 364.1 334.2 359.8 335.6 355.8C337.0 351.9 339.3 347.7 343.1 345.0C346.9 342.3 354.1 340.6 358.2 339.7z" fill="#fff200" stroke="#ee1a1a" stroke-width="2.100"/>
<path d="M336.700 357.900Q343.500 357.500 347.400 362.200M421 400L423.500 405.500" stroke="#ee1a1a" stroke-width="1.300" fill="none"/>
<text x="582" y="148.500" font-family="DejaVu Sans Light,DejaVu Sans,Liberation Sans,sans-serif" font-weight="200" font-style="italic" font-size="27" fill="#ee1a1a" stroke="#ee1a1a" stroke-width="0.900" textLength="94" lengthAdjust="spacingAndGlyphs">Thảo</text>
</svg>
<div class="abs" style="left:741px;top:72px;width:15px;height:443px;background:linear-gradient(90deg,#2b2b2b,#353535)"></div>
<div class="abs" style="left:744.500px;top:74px;border-left:3.500px solid transparent;border-right:3.500px solid transparent;border-bottom:6px solid #b8b8b8"></div>
<div class="abs" style="left:742px;top:241px;width:13px;height:107px;border-radius:5px;background:linear-gradient(90deg,#5e5e5e,#7a7a7a 50%,#626262)"></div>
<div class="abs" style="left:741px;top:504px;width:15px;height:12px;background:#2e2e2e"></div>
<div class="abs" style="left:745px;top:508px;border-left:3.500px solid transparent;border-right:3.500px solid transparent;border-top:6px solid #a8a8a8"></div>
<div class="abs" style="left:173px;top:515px;width:583px;height:15px;background:linear-gradient(#2b2b2b,#363636)"></div>
<div class="abs" style="left:177px;top:519px;border-top:3.500px solid transparent;border-bottom:3.500px solid transparent;border-right:5px solid #a8a8a8"></div>
<div class="abs" style="left:749px;top:519px;border-top:3.500px solid transparent;border-bottom:3.500px solid transparent;border-left:5px solid #a8a8a8"></div>
<div class="abs" style="left:396px;top:516px;width:141px;height:13px;border-radius:5px;background:linear-gradient(#747474,#666)"></div>
<div class="abs" style="left:756px;top:56px;width:2px;height:475px;background:#1c1c1c"></div>
<div class="abs" style="left:439px;top:474px;width:295px;height:33px;background:#1f1f1f;border-radius:3px;border-right:1px solid #8a8a8a;border-bottom:1px solid #9a9a9a;font-size:9.400px;color:#dcdcdc;text-align:center;line-height:12px;letter-spacing:0.090px;padding:5px 17px 0 0">You are not using the latest version of MediBang Paint.<br>Please install the latest version of MediBang Paint found here.<div class="abs" style="left:277px;top:11.500px;width:10.500px;height:10.500px;border:1.200px solid #ddd"><svg viewBox="0 0 8 8" style="position:absolute;left:0;top:0;width:8px;height:8px"><path d="M1.500 1.500l5 5M6.500 1.500l-5 5" stroke="#eee" stroke-width="1.600"/></svg></div></div>
<!--/CANVAS-->
<!--RIGHTPANELS-->
<div class="abs" style="left:758px;top:56px;width:266px;height:475px;background:#232323"></div>
<div class="ph" style="left:759px;top:56px;width:265px;height:16px;line-height:17px"><span style="position:relative;left:-12px">Navigator</span><svg class="ic" viewBox="0 0 24 10"><path d="M1.500 2.500h5v6h-6v-5" fill="none" stroke="#c8c8c8" stroke-width="1.100"/><path d="M4.500 5.500l4-4M6 1h3v3" fill="none" stroke="#c8c8c8" stroke-width="1.100"/><path d="M15.500 2l6 6M21.500 2l-6 6" stroke="#e0e0e0" stroke-width="1.900"/></svg></div>
<div class="abs" style="left:759px;top:72px;width:265px;height:23px;background:#262626"></div>
<div class="sbt" style="left:762px;top:75px;width:18px;height:17px;background:#484848;"><svg viewBox="0 0 18 17"><circle cx="8" cy="7.500" r="3.800" fill="none" stroke="#e8e8e8" stroke-width="1.300"/><path d="M10.800 10.500l3.500 3.500" stroke="#e8e8e8" stroke-width="1.800"/><path d="M7.300 6.300l1-.8v4" stroke="#e8e8e8" stroke-width="1" fill="none"/></svg></div>
<div class="abs" style="left:783.5px;top:79px;width:1px;height:9px;background:#6a6a6a"></div>
<div class="sbt" style="left:788px;top:75px;width:17px;height:17px;background:#484848;"><svg viewBox="0 0 17 17"><circle cx="8" cy="7.500" r="3.800" fill="none" stroke="#e8e8e8" stroke-width="1.300"/><path d="M10.800 10.500l3.500 3.500" stroke="#e8e8e8" stroke-width="1.800"/><path d="M6 7.500h4M8 5.500v4" stroke="#e8e8e8" stroke-width="1.100"/></svg></div>
<div class="sbt" style="left:808px;top:75px;width:17px;height:17px;background:#484848;"><svg viewBox="0 0 17 17"><rect x="3.500" y="4" width="11" height="9.500" fill="none" stroke="#e8e8e8" stroke-width="1.100"/><path d="M5 7.500v-2h2M11 5.500h2v2M13 10v2h-2M7 12h-2v-2" fill="none" stroke="#e8e8e8" stroke-width="1"/></svg></div>
<div class="sbt" style="left:828px;top:75px;width:18px;height:17px;background:#484848;"><svg viewBox="0 0 18 17"><circle cx="8" cy="7.500" r="3.800" fill="none" stroke="#e8e8e8" stroke-width="1.300"/><path d="M10.800 10.500l3.500 3.500" stroke="#e8e8e8" stroke-width="1.800"/><path d="M6 7.500h4" stroke="#e8e8e8" stroke-width="1.100"/></svg></div>
<div class="abs" style="left:849px;top:79px;width:1px;height:9px;background:#6a6a6a"></div>
<div class="sbt" style="left:854px;top:75px;width:17px;height:17px;background:#484848;"><svg viewBox="0 0 17 17"><circle cx="9" cy="8.800" r="5" fill="none" stroke="#e8e8e8" stroke-width="1.300" stroke-dasharray="25 6.400" transform="rotate(-30 9 8.800)"/><rect x="6.300" y="6.800" width="5.400" height="4" rx="0.800" fill="#e8e8e8" transform="rotate(20 9 8.800)"/></svg></div>
<div class="sbt" style="left:874px;top:75px;width:17px;height:17px;background:#202020;border:1px solid #4a4a4a;"><svg viewBox="0 0 17 17"><rect x="5" y="5.500" width="8" height="6.500" fill="#e8e8e8"/><path d="M2.500 3l3 3M15.500 3l-3 3M2.500 14.500l3-3M15.500 14.500l-3-3" stroke="#e8e8e8" stroke-width="1.200"/></svg></div>
<div class="sbt" style="left:894px;top:75px;width:18px;height:17px;background:#484848;"><svg viewBox="0 0 18 17"><circle cx="9" cy="8.800" r="5" fill="none" stroke="#e8e8e8" stroke-width="1.300" stroke-dasharray="25 6.400" transform="rotate(-100 9 8.800)"/><rect x="6.300" y="6.800" width="5.400" height="4" rx="0.800" fill="#e8e8e8" transform="rotate(-20 9 8.800)"/></svg></div>
<div class="abs" style="left:916px;top:79px;width:1px;height:9px;background:#6a6a6a"></div>
<div class="sbt" style="left:920px;top:75px;width:17px;height:17px;background:#484848;"><svg viewBox="0 0 17 17"><path d="M3.500 13.500v-5l4-3.500v8.500z" fill="#e8e8e8"/><path d="M10.500 13.500v-8.500l4 3.500v5z" fill="none" stroke="#e8e8e8" stroke-width="1"/><path d="M9 3v11" stroke="#e8e8e8" stroke-width="0.800" stroke-dasharray="1.500 1"/></svg></div>
<div class="abs" style="left:759px;top:95px;width:265px;height:41px;background:#444"></div>
<svg class="abs" style="left:864px;top:95px" width="54" height="41" viewBox="0 0 54 41"><rect x="1" y="1" width="52" height="39" fill="#fff" stroke="#c81818" stroke-width="2"/><g fill="none" stroke="#f09090" stroke-width="0.700"><rect x="12" y="1.500" width="12" height="13" rx="1"/><circle cx="17.800" cy="8" r="3.300"/><path d="M12 15.500h12"/><path d="M14 20q3.500-2.500 7.500 0v3.500h-7.500z"/><ellipse cx="18" cy="24" rx="4.500" ry="1.300"/><ellipse cx="17.300" cy="29.500" rx="9.300" ry="4.200"/><circle cx="14" cy="29.500" r="2.500"/><ellipse cx="20.500" cy="28.800" rx="4.300" ry="2.800"/><path d="M39.500 5.500h3m-1.500 0v2.500m2-1.500l1 1.500 2-1.500 1.500.800" stroke="#f07070"/></g></svg>
<div class="ph" style="left:759px;top:139px;width:265px;height:17px;line-height:17px"><span style="position:relative;left:-12px">Layer</span><svg class="ic" viewBox="0 0 24 10"><path d="M1.500 2.500h5v6h-6v-5" fill="none" stroke="#c8c8c8" stroke-width="1.100"/><path d="M4.500 5.500l4-4M6 1h3v3" fill="none" stroke="#c8c8c8" stroke-width="1.100"/><path d="M15.500 2l6 6M21.500 2l-6 6" stroke="#e0e0e0" stroke-width="1.900"/></svg></div>
<div class="abs" style="left:759px;top:156px;width:265px;height:176px;background:#262626"></div>
<div class="tx" style="left:764px;top:160.500px;font-size:8.600px;color:#d8d8d8;letter-spacing:-0.2px">Opacity</div>
<div class="abs" style="left:830px;top:159px;width:155px;height:12px;background:linear-gradient(90deg,#8ccaf8,#4a94d4);border:1px solid #3a6a9a"></div>
<div class="tx" style="left:989px;top:160.500px;font-size:8.600px;color:#d8d8d8">100 %</div>
<div class="tx" style="left:764px;top:179.500px;font-size:8.600px;color:#d8d8d8;letter-spacing:-0.2px">Blending</div>
<div class="abs" style="left:831px;top:176px;width:189px;height:15.500px;background:#484848;border-radius:2px"><div class="tx" style="left:3px;top:3.500px;font-size:8.600px;color:#ddd;letter-spacing:-0.2px">Normal</div><div class="abs" style="right:4px;top:6.500px;border-left:3px solid transparent;border-right:3px solid transparent;border-top:3px solid #aaa"></div></div>
<div class="abs" style="left:766px;top:199px;width:9px;height:9px;border:1px solid #d8d8d8;background:#222"></div>
<div class="tx" style="left:778.500px;top:198.500px;font-size:8.600px;color:#e0e0e0;letter-spacing:-0.1px">Protect Alpha</div>
<div class="abs" style="left:853px;top:199px;width:9px;height:9px;border:1px solid #555;background:#222"></div>
<div class="tx" style="left:865.500px;top:198.500px;font-size:8.600px;color:#777;letter-spacing:-0.1px">Clipping</div>
<div class="abs" style="left:939px;top:199px;width:9px;height:9px;border:1px solid #d8d8d8;background:#222"></div>
<div class="tx" style="left:951.500px;top:198.500px;font-size:8.600px;color:#e0e0e0;letter-spacing:-0.1px">Lock</div>
<div class="abs" style="left:762px;top:215px;width:245px;height:94px;background:#444"></div>
<div class="abs" style="left:762px;top:215px;width:14px;height:28px;background:#8a8a8a"><div class="abs" style="left:3.500px;top:10.500px;width:7px;height:7px;border-radius:50%;background:#f0f0f0"></div></div>
<div class="abs" style="left:776px;top:215px;width:231px;height:28px;background:#4f9bd8"></div>
<svg class="abs" style="left:786px;top:220px" width="28" height="19" viewBox="0 0 28 19"><defs><pattern id="chk" width="6" height="6" patternUnits="userSpaceOnUse"><rect width="6" height="6" fill="#fff"/><rect width="3" height="3" fill="#e0e0e0"/><rect x="3" y="3" width="3" height="3" fill="#e0e0e0"/></pattern></defs><rect width="28" height="19" fill="url(#chk)" stroke="#ddd" stroke-width="0.500"/><g fill="none" stroke="#f08080" stroke-width="0.600"><rect x="6" y="1" width="5.500" height="6"/><circle cx="8.700" cy="4" r="1.500"/><path d="M7 9h3.500v2.500h-3.500z"/><ellipse cx="8.500" cy="14" rx="4.200" ry="2"/></g></svg>
<div class="tx" style="left:825px;top:223px;font-size:10px;font-weight:bold;color:#fff;font-family:'DejaVu Sans','Liberation Sans',sans-serif;letter-spacing:-0.4px">Layer1</div>
<svg class="abs" style="left:990.500px;top:222.500px" width="13" height="13" viewBox="0 0 10 10"><circle cx="5" cy="5" r="3.100" fill="#fff"/><path d="M5 .3v9.400M.3 5h9.400M1.700 1.700l6.600 6.600M8.300 1.700l-6.600 6.600" stroke="#fff" stroke-width="1.500"/><circle cx="5" cy="5" r="1.300" fill="#4f9bd8"/></svg>
<div class="abs" style="left:1008px;top:215px;width:14px;height:94px;background:#333"></div>
<div class="abs" style="left:1011px;top:216px;border-left:3.500px solid transparent;border-right:3.500px solid transparent;border-bottom:6px solid #b8b8b8"></div>
<div class="abs" style="left:1011px;top:301px;border-left:3.500px solid transparent;border-right:3.500px solid transparent;border-top:6px solid #b8b8b8"></div>
<div class="abs" style="left:1008.500px;top:223px;width:13px;height:75px;border-radius:5px;background:linear-gradient(90deg,#5c5c5c,#747474 50%,#5e5e5e)"></div>
<div class="sbt" style="left:764px;top:311px;width:17px;height:17px;background:#484848;"><svg viewBox="0 0 17 17"><path d="M4.500 3.500h5.500l3 3v8h-8.500z" fill="none" stroke="#e8e8e8" stroke-width="1.100"/><path d="M10 3.500v3h3" fill="none" stroke="#e8e8e8" stroke-width="0.900"/></svg></div>
<div class="sbt" style="left:784.5px;top:311px;width:17px;height:17px;background:#484848;"><svg viewBox="0 0 17 17"><path d="M4.500 3.500h5.500l3 3v8h-8.500z" fill="none" stroke="#e8e8e8" stroke-width="1.100"/><path d="M10 3.500v3h3" fill="none" stroke="#e8e8e8" stroke-width="0.900"/><text x="8.700" y="13" font-size="6.500" font-family="Liberation Sans,sans-serif" text-anchor="middle" fill="#e8e8e8">8</text></svg></div>
<div class="sbt" style="left:804.5px;top:311px;width:17px;height:17px;background:#484848;"><svg viewBox="0 0 17 17"><path d="M4.500 3.500h5.500l3 3v8h-8.500z" fill="none" stroke="#e8e8e8" stroke-width="1.100"/><path d="M10 3.500v3h3" fill="none" stroke="#e8e8e8" stroke-width="0.900"/><text x="8.700" y="13" font-size="6.500" font-family="Liberation Sans,sans-serif" text-anchor="middle" fill="#e8e8e8">1</text></svg></div>
<div class="sbt" style="left:824.5px;top:311px;width:22px;height:17px;background:#484848;"><svg viewBox="0 0 22 17"><path d="M4.500 3.500h5.500l3 3v8h-8.500z" fill="none" stroke="#e8e8e8" stroke-width="1.100"/><path d="M10 3.500v3h3" fill="none" stroke="#e8e8e8" stroke-width="0.900"/><path d="M8.500 12.500h5M11 10v5" stroke="#e8e8e8" stroke-width="1.300"/><path d="M15.500 8h5l-2.500 3z" fill="#e8e8e8"/></svg></div>
<div class="sbt" style="left:850.5px;top:311px;width:17px;height:17px;background:#484848;"><svg viewBox="0 0 17 17"><path d="M3 5h4.500l1.500 1.500h5.500v7.500h-11.500z" fill="#e8e8e8"/></svg></div>
<div class="abs" style="left:871px;top:315px;width:1px;height:9px;background:#555"></div>
<div class="sbt" style="left:875.5px;top:311px;width:17px;height:17px;background:#484848;"><svg viewBox="0 0 17 17"><rect x="6.500" y="4" width="7.500" height="7.500" fill="none" stroke="#e8e8e8" stroke-width="1.100"/><rect x="3.500" y="6.500" width="7.500" height="7.500" fill="#484848" stroke="#e8e8e8" stroke-width="1.100"/></svg></div>
<div class="sbt" style="left:896px;top:311px;width:17px;height:17px;background:#484848;"><svg viewBox="0 0 17 17"><rect x="3.500" y="4" width="4" height="4" fill="none" stroke="#e8e8e8" stroke-width="1"/><rect x="3.500" y="10.500" width="4" height="4" fill="none" stroke="#e8e8e8" stroke-width="1"/><rect x="10" y="7" width="4.500" height="4.500" fill="#e8e8e8"/><path d="M7.500 6l2.500 2M7.500 12.500l2.500-2" stroke="#e8e8e8" stroke-width="1"/></svg></div>
<div class="abs" style="left:917.5px;top:315px;width:1px;height:9px;background:#555"></div>
<div class="sbt" style="left:921px;top:311px;width:17px;height:17px;background:#484848;"><svg viewBox="0 0 17 17"><path d="M4.500 6h8.500M6.500 6v-1.500h4.500v1.500" fill="none" stroke="#e8e8e8" stroke-width="1.300"/><path d="M5 7h7.500l-.6 7.500h-6.300z" fill="#e8e8e8"/><path d="M7.300 8.500v4.500M8.750 8.500v4.500M10.200 8.500v4.500" stroke="#484848" stroke-width="0.800"/></svg></div>
<div class="ph" style="left:759px;top:336px;width:265px;height:16px;line-height:16px"><span style="position:relative;left:-12px">Reference</span><svg class="ic" viewBox="0 0 24 10"><path d="M1.500 2.500h5v6h-6v-5" fill="none" stroke="#c8c8c8" stroke-width="1.100"/><path d="M4.500 5.500l4-4M6 1h3v3" fill="none" stroke="#c8c8c8" stroke-width="1.100"/><path d="M15.500 2l6 6M21.500 2l-6 6" stroke="#e0e0e0" stroke-width="1.900"/></svg></div>
<div class="abs" style="left:759px;top:352px;width:265px;height:22px;background:#262626"></div>
<div class="sbt" style="left:762.5px;top:355px;width:17px;height:17px;background:#484848;"><svg viewBox="0 0 17 17"><path d="M4 9.500h10a2.200 2.200 0 0 0 .2-4.400 3.200 3.200 0 0 0-6-1 2.200 2.200 0 0 0-2.700 2A1.800 1.800 0 0 0 4 9.500z" fill="#e8e8e8"/><path d="M9 14.500v-5.500" stroke="#484848" stroke-width="3.200"/><path d="M9 12v-4" stroke="#e8e8e8" stroke-width="1.600"/><path d="M6 11.500h6l-3 3.500z" fill="#e8e8e8" stroke="#484848" stroke-width="0.500"/></svg></div>
<div class="sbt" style="left:783px;top:355px;width:17px;height:17px;background:#484848;"><svg viewBox="0 0 17 17"><path d="M3 4.500h4l1.500 1.500h5v1.500h-8l-2.500 5z" fill="#e8e8e8"/><path d="M6 8.500h9.500l-2.500 5h-9.500z" fill="#e8e8e8"/></svg></div>
<div class="sbt" style="left:803px;top:355px;width:17px;height:17px;background:#202020;border:1px solid #4a4a4a;"><svg viewBox="0 0 17 17"><path d="M5.500 5l6 6.500M11.500 5l-6 6.500" stroke="#e8e8e8" stroke-width="1.600"/></svg></div>
<div class="abs" style="left:824px;top:359px;width:1px;height:9px;background:#6a6a6a"></div>
<div class="sbt" style="left:827.5px;top:355px;width:17px;height:17px;background:#484848;"><svg viewBox="0 0 17 17"><circle cx="8" cy="7.500" r="3.800" fill="none" stroke="#e8e8e8" stroke-width="1.300"/><path d="M10.800 10.500l3.500 3.500" stroke="#e8e8e8" stroke-width="1.800"/><path d="M6 7.500h4M8 5.500v4" stroke="#e8e8e8" stroke-width="1.100"/></svg></div>
<div class="sbt" style="left:848px;top:355px;width:17px;height:17px;background:#484848;"><svg viewBox="0 0 17 17"><rect x="3.500" y="4" width="11" height="9.500" fill="none" stroke="#e8e8e8" stroke-width="1.100"/><path d="M5 7.500v-2h2M11 5.500h2v2M13 10v2h-2M7 12h-2v-2" fill="none" stroke="#e8e8e8" stroke-width="1"/></svg></div>
<div class="sbt" style="left:869px;top:355px;width:17px;height:17px;background:#484848;"><svg viewBox="0 0 17 17"><circle cx="8" cy="7.500" r="3.800" fill="none" stroke="#e8e8e8" stroke-width="1.300"/><path d="M10.800 10.500l3.500 3.500" stroke="#e8e8e8" stroke-width="1.800"/><path d="M6 7.500h4" stroke="#e8e8e8" stroke-width="1.100"/></svg></div>
<div class="abs" style="left:890px;top:359px;width:1px;height:9px;background:#6a6a6a"></div>
<div class="sbt" style="left:894px;top:355px;width:17px;height:17px;background:#202020;border:1px solid #4a4a4a;"><svg viewBox="0 0 17 17"><path d="M5 13l6-6" stroke="#e8e8e8" stroke-width="2.400" stroke-linecap="round"/><path d="M5.500 12.500l5-5" stroke="#202020" stroke-width="0.800"/><path d="M10 5l3 3" stroke="#e8e8e8" stroke-width="1.500"/><path d="M11.800 6.300l2-2" stroke="#e8e8e8" stroke-width="2.600" stroke-linecap="round"/></svg></div>
<div class="sbt" style="left:914.5px;top:355px;width:17px;height:17px;background:#4f9fe0;"><svg viewBox="0 0 17 17"><g transform="translate(-1.800,-1.500) scale(0.900)"><path d="M6.500 11V6.200a.9.900 0 0 1 1.800 0V9.500 4.800a.9.900 0 0 1 1.800 0V9.500 4.300a.9.900 0 0 1 1.800 0V9.500 5.300a.9.900 0 0 1 1.800 0V13c0 2.500-1.500 4-4 4-2 0-3-.8-4-2.500L3.800 11.500c-.5-1 .6-1.700 1.300-1z" fill="#fff"/></g></svg></div>
<div class="abs" style="left:936px;top:359px;width:1px;height:9px;background:#6a6a6a"></div>
<div class="sbt" style="left:940px;top:355px;width:17px;height:17px;background:#484848;"><svg viewBox="0 0 17 17"><circle cx="9" cy="8.800" r="5" fill="none" stroke="#e8e8e8" stroke-width="1.300" stroke-dasharray="25 6.400" transform="rotate(-30 9 8.800)"/><rect x="6.300" y="6.800" width="5.400" height="4" rx="0.800" fill="#e8e8e8" transform="rotate(20 9 8.800)"/></svg></div>
<div class="sbt" style="left:960px;top:355px;width:17px;height:17px;background:#202020;border:1px solid #4a4a4a;"><svg viewBox="0 0 17 17"><rect x="5" y="5.500" width="8" height="6.500" fill="#e8e8e8"/><path d="M2.500 3l3 3M15.500 3l-3 3M2.500 14.500l3-3M15.500 14.500l-3-3" stroke="#e8e8e8" stroke-width="1.200"/></svg></div>
<div class="sbt" style="left:980.5px;top:355px;width:17px;height:17px;background:#484848;"><svg viewBox="0 0 17 17"><circle cx="9" cy="8.800" r="5" fill="none" stroke="#e8e8e8" stroke-width="1.300" stroke-dasharray="25 6.400" transform="rotate(-100 9 8.800)"/><rect x="6.300" y="6.800" width="5.400" height="4" rx="0.800" fill="#e8e8e8" transform="rotate(-20 9 8.800)"/></svg></div>
<div class="abs" style="left:1002px;top:359px;width:1px;height:9px;background:#6a6a6a"></div>
<div class="abs" style="left:1016px;top:355px;width:6px;height:17px;background:#555;border-radius:2px"></div>
<div class="abs" style="left:759px;top:375px;width:265px;height:4px;background:#f4f4f4;background-image:linear-gradient(90deg,#e2e2e2 50%,transparent 50%);background-size:8px 4px"></div>
<div class="ph" style="left:759px;top:383px;width:265px;height:16px;line-height:16px"><span style="position:relative;left:-12px">Brush Size</span><svg class="ic" viewBox="0 0 24 10"><path d="M1.500 2.500h5v6h-6v-5" fill="none" stroke="#c8c8c8" stroke-width="1.100"/><path d="M4.500 5.500l4-4M6 1h3v3" fill="none" stroke="#c8c8c8" stroke-width="1.100"/><path d="M15.500 2l6 6M21.500 2l-6 6" stroke="#e0e0e0" stroke-width="1.900"/></svg></div>
<div class="abs" style="left:759px;top:399px;width:265px;height:132px;background:#444"></div>
<div class="abs" style="left:759px;top:399.5px;width:29px;height:36.200px;background:#585858"></div>
<svg class="abs" style="left:759px;top:404.3px" width="29" height="20" viewBox="0 0 29 20"><circle cx="14.800" cy="10" r="0.3" fill="rgba(240,240,240,0.25)"/></svg>
<div class="tx" style="left:759px;width:29px;text-align:center;top:426.5px;font-size:8px;color:#e8e8e8;letter-spacing:-0.1px">1</div>
<div class="abs" style="left:789px;top:399.5px;width:29px;height:36.200px;background:#585858"></div>
<svg class="abs" style="left:789px;top:404.3px" width="29" height="20" viewBox="0 0 29 20"><circle cx="14.800" cy="10" r="0.5" fill="rgba(240,240,240,0.5)"/></svg>
<div class="tx" style="left:789px;width:29px;text-align:center;top:426.5px;font-size:8px;color:#e8e8e8;letter-spacing:-0.1px">1.5</div>
<div class="abs" style="left:819px;top:399.5px;width:29px;height:36.200px;background:#585858"></div>
<svg class="abs" style="left:819px;top:404.3px" width="29" height="20" viewBox="0 0 29 20"><circle cx="14.800" cy="10" r="0.75" fill="rgba(240,240,240,0.9)"/></svg>
<div class="tx" style="left:819px;width:29px;text-align:center;top:426.5px;font-size:8px;color:#e8e8e8;letter-spacing:-0.1px">2</div>
<div class="abs" style="left:849px;top:399.5px;width:29px;height:36.200px;background:#585858"></div>
<svg class="abs" style="left:849px;top:404.3px" width="29" height="20" viewBox="0 0 29 20"><circle cx="14.800" cy="10" r="1.0" fill="rgba(240,240,240,1)"/></svg>
<div class="tx" style="left:849px;width:29px;text-align:center;top:426.5px;font-size:8px;color:#e8e8e8;letter-spacing:-0.1px">3</div>
<div class="abs" style="left:879px;top:399.5px;width:29px;height:36.200px;background:#585858"></div>
<svg class="abs" style="left:879px;top:404.3px" width="29" height="20" viewBox="0 0 29 20"><circle cx="14.800" cy="10" r="1.5" fill="rgba(240,240,240,1)"/></svg>
<div class="tx" style="left:879px;width:29px;text-align:center;top:426.5px;font-size:8px;color:#e8e8e8;letter-spacing:-0.1px">4</div>
<div class="abs" style="left:909px;top:399.5px;width:29px;height:36.200px;background:#585858"></div>
<svg class="abs" style="left:909px;top:404.3px" width="29" height="20" viewBox="0 0 29 20"><circle cx="14.800" cy="10" r="2.0" fill="rgba(240,240,240,1)"/></svg>
<div class="tx" style="left:909px;width:29px;text-align:center;top:426.5px;font-size:8px;color:#e8e8e8;letter-spacing:-0.1px">5</div>
<div class="abs" style="left:939px;top:399.5px;width:29px;height:36.200px;background:#585858"></div>
<svg class="abs" style="left:939px;top:404.3px" width="29" height="20" viewBox="0 0 29 20"><circle cx="14.800" cy="10" r="2.75" fill="rgba(240,240,240,1)"/></svg>
<div class="tx" style="left:939px;width:29px;text-align:center;top:426.5px;font-size:8px;color:#e8e8e8;letter-spacing:-0.1px">7</div>
<div class="abs" style="left:969px;top:399.5px;width:29px;height:36.200px;background:#585858"></div>
<svg class="abs" style="left:969px;top:404.3px" width="29" height="20" viewBox="0 0 29 20"><circle cx="14.800" cy="10" r="3.75" fill="rgba(240,240,240,1)"/></svg>
<div class="tx" style="left:969px;width:29px;text-align:center;top:426.5px;font-size:8px;color:#e8e8e8;letter-spacing:-0.1px">10</div>
<div class="abs" style="left:759px;top:436.7px;width:29px;height:36.200px;background:#585858"></div>
<svg class="abs" style="left:759px;top:441.5px" width="29" height="20" viewBox="0 0 29 20"><circle cx="14.800" cy="10" r="4.5" fill="rgba(240,240,240,1)"/></svg>
<div class="tx" style="left:759px;width:29px;text-align:center;top:464.5px;font-size:8px;color:#e8e8e8;letter-spacing:-0.1px">12</div>
<div class="abs" style="left:789px;top:436.7px;width:29px;height:36.200px;background:#585858"></div>
<svg class="abs" style="left:789px;top:441.5px" width="29" height="20" viewBox="0 0 29 20"><circle cx="14.800" cy="10" r="5.75" fill="rgba(240,240,240,1)"/></svg>
<div class="tx" style="left:789px;width:29px;text-align:center;top:464.5px;font-size:8px;color:#e8e8e8;letter-spacing:-0.1px">15</div>
<div class="abs" style="left:819px;top:436.7px;width:29px;height:36.200px;background:#585858"></div>
<svg class="abs" style="left:819px;top:441.5px" width="29" height="20" viewBox="0 0 29 20"><circle cx="14.800" cy="10" r="7.75" fill="rgba(240,240,240,1)"/></svg>
<div class="tx" style="left:819px;width:29px;text-align:center;top:464.5px;font-size:8px;color:#e8e8e8;letter-spacing:-0.1px">20</div>
<div class="abs" style="left:849px;top:436.7px;width:29px;height:36.200px;background:#585858"></div>
<svg class="abs" style="left:849px;top:441.5px" width="29" height="20" viewBox="0 0 29 20"><circle cx="14.800" cy="10" r="9.0" fill="rgba(240,240,240,1)"/></svg>
<div class="tx" style="left:849px;width:29px;text-align:center;top:464.5px;font-size:8px;color:#e8e8e8;letter-spacing:-0.1px">25</div>
<div class="abs" style="left:879px;top:436.7px;width:29px;height:36.200px;background:#585858"></div>
<svg class="abs" style="left:879px;top:441.5px" width="29" height="20" viewBox="0 0 29 20"><circle cx="14.800" cy="10" r="9.0" fill="rgba(240,240,240,1)"/></svg>
<div class="tx" style="left:879px;width:29px;text-align:center;top:464.5px;font-size:8px;color:#e8e8e8;letter-spacing:-0.1px">30</div>
<div class="abs" style="left:909px;top:436.7px;width:29px;height:36.200px;background:#585858"></div>
<svg class="abs" style="left:909px;top:441.5px" width="29" height="20" viewBox="0 0 29 20"><circle cx="14.800" cy="10" r="9.0" fill="rgba(240,240,240,1)"/></svg>
<div class="tx" style="left:909px;width:29px;text-align:center;top:464.5px;font-size:8px;color:#e8e8e8;letter-spacing:-0.1px">40</div>
<div class="abs" style="left:939px;top:436.7px;width:29px;height:36.200px;background:#585858"></div>
<svg class="abs" style="left:939px;top:441.5px" width="29" height="20" viewBox="0 0 29 20"><circle cx="14.800" cy="10" r="9.0" fill="rgba(240,240,240,1)"/></svg>
<div class="tx" style="left:939px;width:29px;text-align:center;top:464.5px;font-size:8px;color:#e8e8e8;letter-spacing:-0.1px">50</div>
<div class="abs" style="left:969px;top:436.7px;width:29px;height:36.200px;background:#585858"></div>
<svg class="abs" style="left:969px;top:441.5px" width="29" height="20" viewBox="0 0 29 20"><circle cx="14.800" cy="10" r="9.0" fill="rgba(240,240,240,1)"/></svg>
<div class="tx" style="left:969px;width:29px;text-align:center;top:464.5px;font-size:8px;color:#e8e8e8;letter-spacing:-0.1px">70</div>
<div class="abs" style="left:759px;top:473.9px;width:29px;height:36.200px;background:#585858"></div>
<svg class="abs" style="left:759px;top:479.5px" width="29" height="20" viewBox="0 0 29 20"><circle cx="14.800" cy="10" r="9.0" fill="rgba(240,240,240,1)"/></svg>
<div class="tx" style="left:759px;width:29px;text-align:center;top:501.5px;font-size:8px;color:#e8e8e8;letter-spacing:-0.1px">100</div>
<div class="abs" style="left:789px;top:473.9px;width:29px;height:36.200px;background:#585858"></div>
<svg class="abs" style="left:789px;top:479.5px" width="29" height="20" viewBox="0 0 29 20"><circle cx="14.800" cy="10" r="9.0" fill="rgba(240,240,240,1)"/></svg>
<div class="tx" style="left:789px;width:29px;text-align:center;top:501.5px;font-size:8px;color:#e8e8e8;letter-spacing:-0.1px">150</div>
<div class="abs" style="left:819px;top:473.9px;width:29px;height:36.200px;background:#585858"></div>
<svg class="abs" style="left:819px;top:479.5px" width="29" height="20" viewBox="0 0 29 20"><circle cx="14.800" cy="10" r="9.0" fill="rgba(240,240,240,1)"/></svg>
<div class="tx" style="left:819px;width:29px;text-align:center;top:501.5px;font-size:8px;color:#e8e8e8;letter-spacing:-0.1px">200</div>
<div class="abs" style="left:849px;top:473.9px;width:29px;height:36.200px;background:#585858"></div>
<svg class="abs" style="left:849px;top:479.5px" width="29" height="20" viewBox="0 0 29 20"><circle cx="14.800" cy="10" r="9.0" fill="rgba(240,240,240,1)"/></svg>
<div class="tx" style="left:849px;width:29px;text-align:center;top:501.5px;font-size:8px;color:#e8e8e8;letter-spacing:-0.1px">300</div>
<div class="abs" style="left:879px;top:473.9px;width:29px;height:36.200px;background:#585858"></div>
<svg class="abs" style="left:879px;top:479.5px" width="29" height="20" viewBox="0 0 29 20"><circle cx="14.800" cy="10" r="9.0" fill="rgba(240,240,240,1)"/></svg>
<div class="tx" style="left:879px;width:29px;text-align:center;top:501.5px;font-size:8px;color:#e8e8e8;letter-spacing:-0.1px">400</div>
<div class="abs" style="left:909px;top:473.9px;width:29px;height:36.200px;background:#585858"></div>
<svg class="abs" style="left:909px;top:479.5px" width="29" height="20" viewBox="0 0 29 20"><circle cx="14.800" cy="10" r="9.0" fill="rgba(240,240,240,1)"/></svg>
<div class="tx" style="left:909px;width:29px;text-align:center;top:501.5px;font-size:8px;color:#e8e8e8;letter-spacing:-0.1px">500</div>
<div class="abs" style="left:939px;top:473.9px;width:29px;height:36.200px;background:#585858"></div>
<svg class="abs" style="left:939px;top:479.5px" width="29" height="20" viewBox="0 0 29 20"><circle cx="14.800" cy="10" r="9.0" fill="rgba(240,240,240,1)"/></svg>
<div class="tx" style="left:939px;width:29px;text-align:center;top:501.5px;font-size:8px;color:#e8e8e8;letter-spacing:-0.1px">700</div>
<div class="abs" style="left:969px;top:473.9px;width:29px;height:36.200px;background:#585858"></div>
<svg class="abs" style="left:969px;top:479.5px" width="29" height="20" viewBox="0 0 29 20"><circle cx="14.800" cy="10" r="9.0" fill="rgba(240,240,240,1)"/></svg>
<div class="tx" style="left:969px;width:29px;text-align:center;top:501.5px;font-size:8px;color:#e8e8e8;letter-spacing:-0.1px">1000</div>
<div class="abs" style="left:1009px;top:399px;width:14px;height:132px;background:#333"></div>
<div class="abs" style="left:1012px;top:400.500px;border-left:3.500px solid transparent;border-right:3.500px solid transparent;border-bottom:6px solid #b8b8b8"></div>
<div class="abs" style="left:1012px;top:524px;border-left:3.500px solid transparent;border-right:3.500px solid transparent;border-top:6px solid #b8b8b8"></div>
<div class="abs" style="left:1009.500px;top:408px;width:13px;height:113px;border-radius:5px;background:linear-gradient(90deg,#5c5c5c,#747474 50%,#5e5e5e)"></div>
<!--/RIGHTPANELS-->
<!--STATUS-->
<div class="abs" style="left:0;top:531px;width:1024px;height:16px;background:#222"></div>
<div class="tx" style="left:5px;top:534px;font-size:9px;color:#d8d8d8;letter-spacing:-0.2px;word-spacing:-0.7px">1600 * 1200 pixel</div>
<div class="tx" style="left:75.5px;top:534px;font-size:9px;color:#d8d8d8;letter-spacing:-0.1px;word-spacing:-0.3px">(11.6 * 8.7cm)</div>
<div class="tx" style="left:136px;top:534px;font-size:9px;color:#d8d8d8;letter-spacing:-0.1px;word-spacing:0px">350 dpi</div>
<div class="tx" style="left:172px;top:534px;font-size:9px;color:#d8d8d8;letter-spacing:-0.2px;word-spacing:-1.2px">46 %</div>
<div class="tx" style="left:198px;top:534px;font-size:9px;color:#d8d8d8;letter-spacing:-0.2px;word-spacing:-0.85px">( 720, 429 )</div>
<div class="tx" style="left:246px;top:534px;font-size:9px;color:#d8d8d8;letter-spacing:0px;word-spacing:0px">Draw a straight line by holding down Shift, Change a brush size by holding down Ctrl, Alt, and dragging</div>
<div class="abs" style="left:0;top:547px;width:1024px;height:29px;background:linear-gradient(90deg,#151b4e 0%,#141947 35%,#0f1232 60%,#0b0c22 80%,#0a0b1e 100%);border-top:1px solid #6c7396"></div>
<div class="abs" style="left:0;top:548px;width:1024px;height:28px;background:linear-gradient(rgba(255,255,255,0.08),rgba(0,0,0,0) 40%,rgba(0,0,0,0.25))"></div>
<svg class="abs" style="left:5px;top:547px" width="31" height="29" viewBox="0 0 31 29"><defs><radialGradient id="orb" cx="0.5" cy="0.35" r="0.7"><stop offset="0" stop-color="#8fd0f4"/><stop offset="0.55" stop-color="#2f7fc4"/><stop offset="1" stop-color="#123a78"/></radialGradient></defs><circle cx="15.500" cy="14.700" r="13.500" fill="url(#orb)" stroke="#9fc4e8" stroke-width="0.800"/><path d="M9 9.500q3-1.500 6 0l-1 4.500q-3-1.500-6 0z" fill="#f25a28"/><path d="M16 9.800q3 1.500 6 0l-1 4.500q-3 1.500-6 0z" fill="#8cc63f"/><path d="M8 15.200q3-1.500 6 0l-1 4.500q-3-1.500-6 0z" fill="#3fa9f5"/><path d="M15 15.500q3 1.500 6 0l-1 4.500q-3 1.500-6 0z" fill="#fcd116"/></svg>
<svg class="abs" style="left:67px;top:551px" width="23" height="21" viewBox="0 0 23 21"><path d="M1.500 3.500l8 7-8 7z" fill="#9b5fd8"/><path d="M1.500 3.500l8 7-8 7z" fill="none" stroke="#b98cf0" stroke-width="0.500"/><path d="M21.500 1.500v18l-12-9z" fill="#7a3fc0"/><path d="M21.500 1.500v18l-5-3.700v-10.600z" fill="#c8a8f4"/></svg>
<svg class="abs" style="left:112px;top:548px" width="26" height="27" viewBox="0 0 26 27"><circle cx="12.500" cy="14.500" r="11.500" fill="#f4f8f0"/><circle cx="12.500" cy="14.500" r="10.300" fill="#5cb030"/><circle cx="12.500" cy="14.800" r="5.200" fill="none" stroke="#fff" stroke-width="2.200"/><circle cx="12.500" cy="14.800" r="2" fill="#fff"/><path d="M14 9l1.500-7M16.500 10l4-6.500M18.500 12.500l5.500-3.500" stroke="#f07820" stroke-width="1.800"/><path d="M14 9l1.500-7M16.500 10l4-6.500M18.500 12.500l5.500-3.500" stroke="#fff" stroke-width="0.500" fill="none" transform="translate(1,0.600)"/></svg>
<div class="abs" style="left:150px;top:548px;width:43.5px;height:27px;background:linear-gradient(rgba(170,174,200,0.5),rgba(110,114,145,0.4) 45%,rgba(60,64,95,0.4) 50%,rgba(90,94,125,0.45));border:1px solid rgba(190,195,220,0.5);border-radius:2px"></div>
<div class="abs" style="left:196px;top:548px;width:44.5px;height:27px;background:linear-gradient(rgba(225,228,240,0.75),rgba(170,174,196,0.6) 45%,rgba(120,124,150,0.6) 50%,rgba(150,154,180,0.65));border:1px solid rgba(190,195,220,0.8);border-radius:2px"></div>
<div class="abs" style="left:243px;top:548px;width:43.5px;height:27px;background:linear-gradient(rgba(170,174,200,0.5),rgba(110,114,145,0.4) 45%,rgba(60,64,95,0.4) 50%,rgba(90,94,125,0.45));border:1px solid rgba(190,195,220,0.5);border-radius:2px"></div>
<svg class="abs" style="left:160px;top:550px" width="23" height="23" viewBox="-11.500 -11.500 23 23"><circle r="11" fill="#db4437"/><path d="M0 0L-9.530 -5.500A11 11 0 0 0 -5.500 9.530z" fill="#0f9d58"/><path d="M0 0L-5.500 9.530A11 11 0 0 0 9.530 5.500 11 11 0 0 0 10.300 -3.800L0 -3.800z" fill="#ffcd40"/><path d="M0 0L-5.500 9.530A11 11 0 0 1 -9.530 -5.500z" fill="#0f9d58"/><path d="M-9.530 -5.500A11 11 0 0 1 10.300 -3.800L0 -3.800z" fill="#db4437"/><circle r="5" fill="#f1f1f1"/><circle r="3.900" fill="#4285f4"/></svg>
<svg class="abs" style="left:206px;top:549px" width="24" height="24" viewBox="0 0 24 24"><rect x="0.500" y="0.500" width="23" height="23" rx="4" fill="#f6f6f6"/><defs><linearGradient id="mb1" x1="0" y1="0" x2="1" y2="1"><stop offset="0" stop-color="#f0484a"/><stop offset="1" stop-color="#f8a030"/></linearGradient></defs><path d="M12 3.500c4 3 6.500 6.500 6.500 10a6.500 6.500 0 0 1-13 0c0-3.500 2.500-7 6.500-10z" fill="#18a8c8"/><path d="M12 3.500c-4 3-6.500 6.500-6.500 10 0 1.500.5 3 1.500 4 3-1 5-4 5-8z" fill="url(#mb1)"/><path d="M8 18.500a6.500 6.500 0 0 0 10.300-3.500c-3.500-2-8-1-10.300 3.500z" fill="#48b848"/></svg>
<svg class="abs" style="left:252px;top:548px" width="26" height="27" viewBox="0 0 26 27"><path d="M3 15c0-5 4.500-8.500 10.500-8.500 5 0 8.500 2.500 8.500 6 0 3-2 4-4 4-1.500 0-2.500.8-2 2.300.5 1.700-1 3.200-4 3.200-5 0-9-2.500-9-7z" fill="#e8eef8" stroke="#a8b4cc" stroke-width="0.600"/><circle cx="7.500" cy="12" r="1.700" fill="#e03030"/><circle cx="12" cy="9.800" r="1.700" fill="#30a040"/><circle cx="16.800" cy="10.800" r="1.700" fill="#3060d0"/><circle cx="7.500" cy="17" r="1.600" fill="#f0c020"/><path d="M12.500 18.500L21.500 4.500l1.800 1.200L15 20z" fill="#e89030"/><path d="M21.500 4.500l1-2.500 1.500 1-.7 2.700z" fill="#c8c8c8"/></svg>
<div class="abs" style="left:911px;top:551px;width:2px;height:22px;background-image:linear-gradient(rgba(160,165,200,0.5) 50%,transparent 50%);background-size:2px 3px"></div>
<div class="tx" style="left:923px;top:555px;font-size:8.400px;color:#e8e8f0">EN</div>
<div class="abs" style="left:946.500px;top:560px;border-left:3px solid transparent;border-right:3px solid transparent;border-bottom:3.500px solid #f0f0f0"></div>
<div class="tx" style="left:953px;width:60px;text-align:center;top:548px;font-size:9.200px;color:#f0f0f4;letter-spacing:-0.35px">3:51 PM</div>
<div class="tx" style="left:953px;width:60px;text-align:center;top:562px;font-size:9.200px;color:#f0f0f4;letter-spacing:-0.35px">6/16/2021</div>
<div class="abs" style="left:1014px;top:548px;width:10px;height:28px;background:linear-gradient(90deg,rgba(200,205,230,0.5),rgba(90,95,130,0.4) 40%,rgba(40,44,70,0.6));border-left:1px solid rgba(200,205,230,0.6)"></div>
<!--/STATUS-->
</body>
</html>
